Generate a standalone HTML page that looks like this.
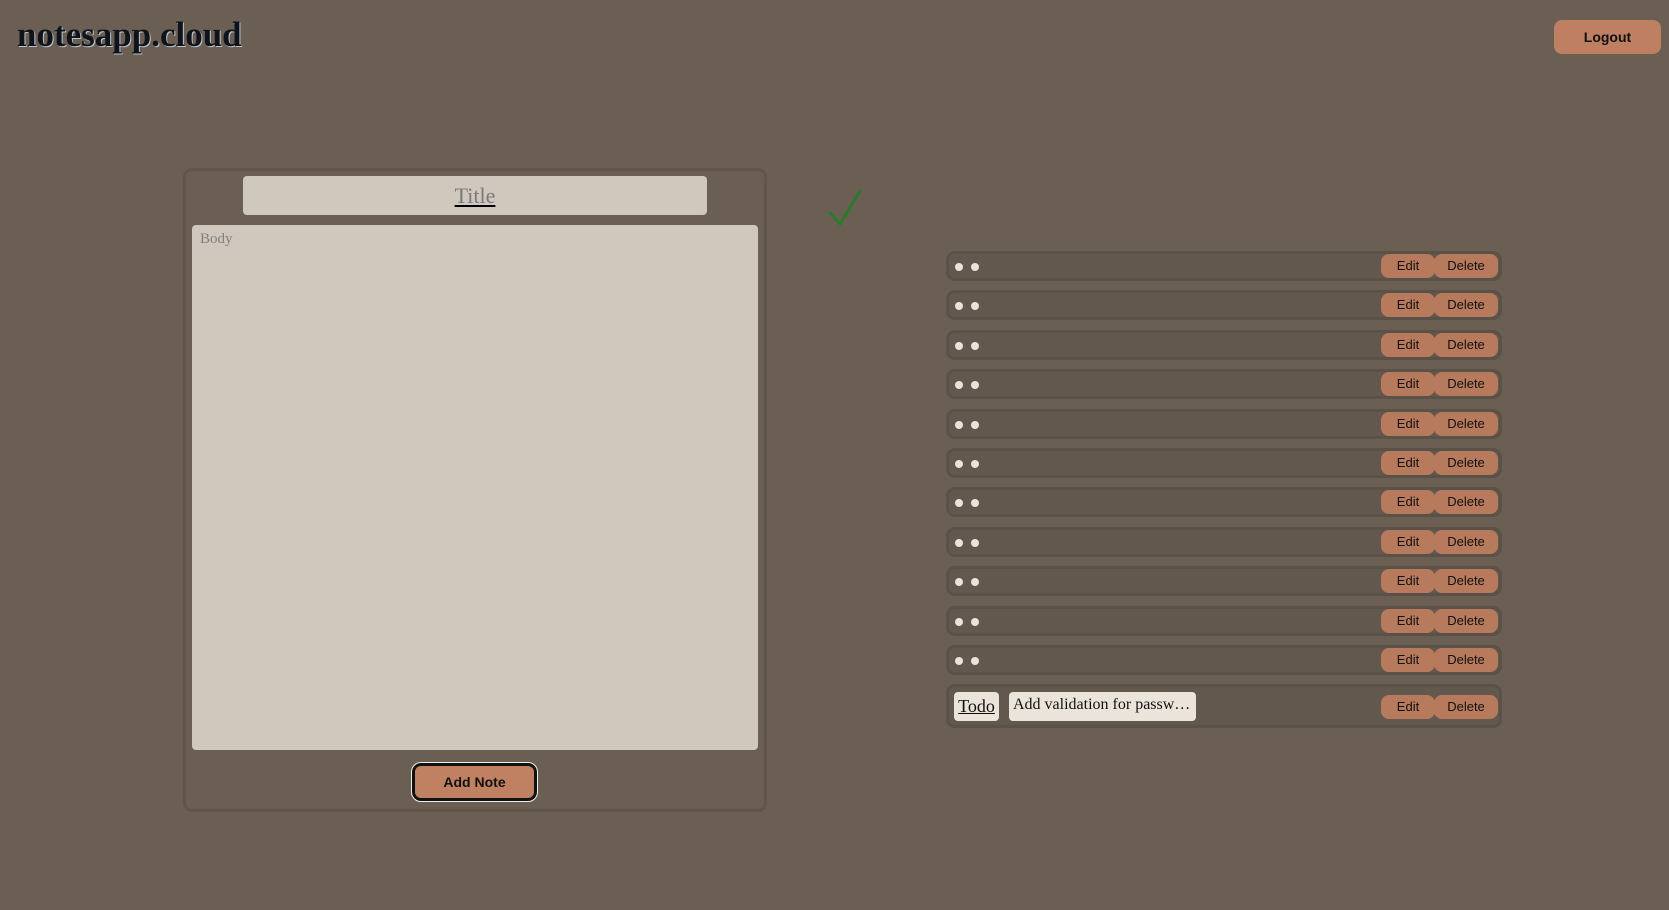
<!DOCTYPE html>
<html><head><style>
*{box-sizing:border-box;margin:0;padding:0}
body{width:1669px;height:910px;background:#6b5f53;position:relative;overflow:hidden;font-family:"Liberation Sans",sans-serif}
.abs{position:absolute}
.logo{left:17px;top:15px;font:bold 35px "Liberation Serif",serif;color:#10141a;text-shadow:1px 1px 0 #b8c4d0}
.logout{left:1554px;top:20px;width:107px;height:34px;background:#bf7f62;border-radius:8px;font-weight:bold;font-size:14px;color:#111;text-align:center;line-height:34px}
.panel{left:183px;top:168px;width:584px;height:644px;border:3px solid #5f554b;border-radius:9px}
.title{left:243px;top:176px;width:464px;height:39px;background:#d0c8bd;border-radius:4px;text-align:center;font:22px "Liberation Serif",serif;color:#7a7a7a;line-height:39px}
.title span{text-decoration:underline;text-decoration-color:#000}
.body{left:192px;top:225px;width:566px;height:525px;background:#d0c8bd;border-radius:4px;font:15px "Liberation Serif",serif;color:#808080;padding:6px 8px}
.add{left:412px;top:763px;width:125px;height:38px;background:#c08163;border:3px solid #111;outline:1.5px solid #eee;border-radius:9px;font-weight:bold;font-size:14px;text-align:center;line-height:32px;color:#111}
.row{left:946px;width:556px;height:30px;background:#62584e;border:3px solid #5a5148;border-radius:9px}
.dot{position:absolute;top:9px;width:8px;height:8px;border-radius:50%;background:#ece4dc}
.btn{position:absolute;height:24px;background:#b87a5c;border-radius:8px;font-size:13px;color:#111;text-align:center;line-height:24px}
</style></head><body>
<div class="abs logo">notesapp.cloud</div>
<div class="abs logout">Logout</div>
<div class="abs panel"></div>
<div class="abs title"><span>Title</span></div>
<div class="abs body">Body</div>
<div class="abs add">Add Note</div>
<svg class="abs" style="left:820px;top:185px" width="50" height="50"><polyline points="10,28 20,39 40,6" fill="none" stroke="#2a7a2e" stroke-width="3" stroke-linecap="round" stroke-linejoin="round"/></svg>
<div id="rows"></div>
<script>
var h='';
for(var i=0;i<11;i++){var t=251+Math.round(i*39.4);
h+='<div class="abs row" style="top:'+t+'px"><div class="dot" style="left:6px"></div><div class="dot" style="left:22px"></div><div class="btn" style="left:432px;top:0;width:54px">Edit</div><div class="btn" style="left:485px;top:0;width:64px">Delete</div></div>';}
h+='<div class="abs row" style="top:684px;height:44px"><div style="position:absolute;left:5px;top:5px;width:45px;height:29px;background:#ebe4da;border-radius:4px;font:18px \'Liberation Serif\',serif;text-decoration:underline;text-align:center;line-height:29px;color:#111">Todo</div><div style="position:absolute;left:60px;top:5px;width:187px;height:29px;background:#ebe4da;border-radius:4px;font:16px \'Liberation Serif\',serif;line-height:26px;padding-left:4px;color:#111;white-space:nowrap;overflow:hidden">Add validation for passw…</div><div class="btn" style="left:432px;top:8px;width:54px">Edit</div><div class="btn" style="left:485px;top:8px;width:64px">Delete</div></div>';
document.getElementById('rows').innerHTML=h;
</script>
</body></html>
